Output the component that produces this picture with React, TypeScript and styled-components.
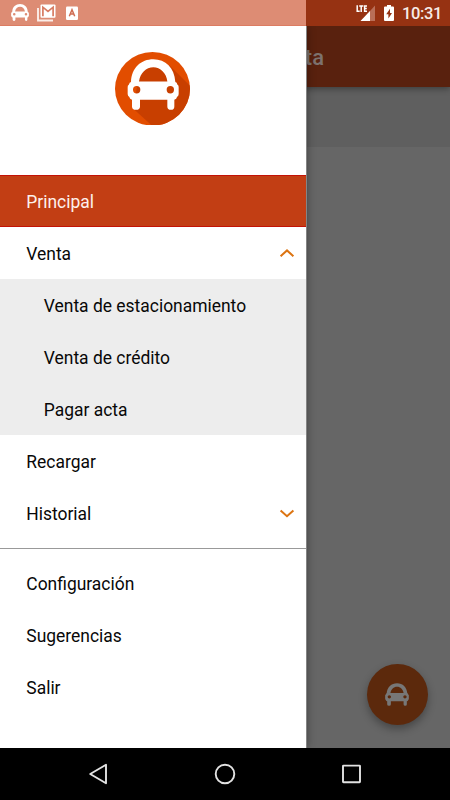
import React from 'react';
import styled, { createGlobalStyle, css } from 'styled-components';

const GlobalStyle = createGlobalStyle`
  * { box-sizing: border-box; }
  body { margin: 0; font-family: Roboto, "Liberation Sans", sans-serif; }
`;

const Phone = styled.div`
  position: relative;
  display: flex;
  flex-direction: column;
  width: 450px;
  height: 800px;
  overflow: hidden;
  background: #666;
`;

const StatusBar = styled.header`
  position: relative;
  z-index: 3;
  flex: none;
  display: flex;
  justify-content: space-between;
  height: 26px;
  background: #963212;
`;

const Notifications = styled.div`
  display: flex;
  align-items: center;
  gap: 8px;
  width: 306px;
  padding-left: 11px;
  background: #dd8c74;
  border-bottom: 1px solid #dc7c62;
`;

const SystemIcons = styled.div`
  display: flex;
  align-items: center;
  padding-right: 9px;
`;

const Signal = styled.svg`
  width: 20px;
  height: 18px;
  margin-right: 8px;
`;

const Battery = styled.svg`
  width: 10px;
  height: 16px;
  margin-right: 8px;
`;

const Clock = styled.time`
  color: #f6ebe7;
  font-size: 16.5px;
  font-weight: 500;
  line-height: 26px;
  width: 39px;
  letter-spacing: -0.4px;
  padding-top: 2px;
`;

const Content = styled.main`
  position: relative;
  flex: 1;
  display: flex;
  flex-direction: column;
`;

const AppBar = styled.div`
  z-index: 1;
  height: 61px;
  padding: 19px 126px 0 0;
  background: #59210e;
  box-shadow: 0 2px 6px rgba(0, 0, 0, 0.35);
  color: #7d726e;
  font-size: 22px;
  font-weight: 500;
  line-height: 26px;
  text-align: right;
`;

const Toolbar = styled.div`
  height: 60px;
  background: #5f5f5f;
`;

const Fab = styled.button`
  position: absolute;
  right: 22px;
  bottom: 23px;
  display: flex;
  align-items: center;
  justify-content: center;
  width: 61px;
  height: 61px;
  padding: 0 1px 0 0;
  border: 0;
  border-radius: 50%;
  background: #5c290c;
  box-shadow: 0 4px 9px rgba(0, 0, 0, 0.32);
`;

const Drawer = styled.nav`
  position: absolute;
  z-index: 2;
  inset: 0 auto 0 0;
  width: 306px;
  background: #fff;
  box-shadow: 1px 0 0 #848484, 0 0 9px rgba(0, 0, 0, 0.45);
`;

const DrawerHeader = styled.div`
  display: flex;
  justify-content: center;
  height: 149px;
  padding: 25.5px 1px 0 0;
`;

const Logo = styled.svg`
  width: 75px;
  height: 73.5px;
`;

const Submenu = styled.div`
  background: #ededed;
`;

const Item = styled.div<{ $active?: boolean; $nested?: boolean }>`
  display: flex;
  align-items: center;
  justify-content: space-between;
  height: 52px;
  padding: 1px 11.5px 0 ${(p) => (p.$nested ? 43.8 : 26.3)}px;
  color: #080808;
  font-size: 17.45px;
  ${(p) =>
    p.$active &&
    css`
      background: #c23e14;
      border-top: 1px solid #c31206;
      border-bottom: 1px solid #c31206;
      color: #fdf0ec;
    `}
`;

const Chevron = styled.svg`
  width: 16px;
  height: 12px;
  fill: none;
  stroke: #dc7412;
  stroke-width: 2;
`;

const Divider = styled.hr`
  height: 1px;
  margin: 9px 0 8px;
  border: 0;
  background: #999;
`;

const SystemNav = styled.footer`
  position: relative;
  z-index: 3;
  flex: none;
  display: flex;
  align-items: center;
  justify-content: space-between;
  height: 52px;
  padding: 0 87px 0 86px;
  background: #000;
`;

const NavIcon = styled.svg`
  width: 24px;
  height: 24px;
  fill: none;
  stroke: #e2e2e2;
  stroke-width: 1.9;
`;

const carBody =
  'M78 125 C80 82 108 57 145 57 C182 57 208 82 211 125 Q216 126 217 132 Q222 135 221 141 V161 Q221 167 216 170 Q215 177 208 178 V198 Q208 208 198 208 Q187 208 187 198 V178 H105 V198 Q105 208 93 208 Q81 208 81 198 V178 Q74 177 73 170 Q68 167 68 161 V141 Q67 135 72 132 Q73 126 78 125 Z M102 123 H187 C184 98 166 81 145 81 C123 81 106 98 102 123 Z M84 148 a11 11 0 1 0 22 0 a11 11 0 1 0 -22 0 Z M185 148 a11 11 0 1 0 22 0 a11 11 0 1 0 -22 0 Z';

function Car({ width, height, color }: { width: number; height: number; color: string }) {
  return (
    <svg width={width} height={height} viewBox="67 56 155 153" preserveAspectRatio="none">
      <path d={carBody} fill={color} fillRule="evenodd" />
    </svg>
  );
}

function Arrow({ up }: { up?: boolean }) {
  return (
    <Chevron viewBox="0 0 16 12">
      <path d={up ? 'M1.6 8.2 L8 2.4 L14.4 8.2' : 'M1.6 2.4 L8 8.2 L14.4 2.4'} />
    </Chevron>
  );
}

export default function App() {
  return (
    <>
      <GlobalStyle />
      <Phone>
        <StatusBar>
          <Notifications>
            <Car width={18} height={17} color="#fff" />
            <svg width="20" height="18" viewBox="0 0 20 18">
              <path d="M1 4 V16.5 H16" fill="none" stroke="#fbeee9" strokeWidth="1.9" />
              <rect x="3.5" y="0.5" width="15" height="13.2" rx="1" fill="#fff" />
              <path d="M5.9 12.2 V3.2 L11 7.4 L16.1 3.2 V12.2" fill="none" stroke="#d77b62" strokeWidth="1.7" />
            </svg>
            <svg width="14" height="14" viewBox="0 0 14 14">
              <rect x="1" y="0.5" width="12" height="13.5" rx="1.2" fill="#fff" />
              <path d="M4.3 10.2 L7 3.8 L9.7 10.2 M5.2 8 H8.8" fill="none" stroke="#cf6d53" strokeWidth="1.5" />
            </svg>
          </Notifications>
          <SystemIcons>
            <Signal viewBox="0 0 20 18">
              <path d="M19 1.5 V17 H5 Z" fill="#b96f58" />
              <path d="M14 7 V17 H4.5 Z" fill="#fff" />
              <path d="M0 0 H11.5 V8.5 H0 Z" fill="#963212" />
              <path d="M1.2 1.3 V7.2 H3.7 M3.2 1.9 H7.3 M5.2 1.9 V7.9 M11 1.9 H8.6 V7.2 H11 M8.6 4.5 H10.8" fill="none" stroke="#fff" strokeWidth="1.5" />
            </Signal>
            <Battery viewBox="0 0 10 16">
              <path d="M3 0 H7 V1.6 H9 Q10 1.6 10 2.6 V15 Q10 16 9 16 H1 Q0 16 0 15 V2.6 Q0 1.6 1 1.6 H3 Z" fill="#fff" />
              <path d="M6 3.8 L2.2 9.3 H4.4 V13.5 L8 7.9 H6 Z" fill="#963212" />
            </Battery>
            <Clock>10:31</Clock>
          </SystemIcons>
        </StatusBar>

        <Content>
          <AppBar>Venta</AppBar>
          <Toolbar />
          <Fab aria-label="Estacionar">
            <Car width={24} height={23} color="#777" />
          </Fab>
          <Drawer>
            <DrawerHeader>
              <Logo viewBox="30 35 225 220" preserveAspectRatio="none">
                <defs>
                  <clipPath id="disc">
                    <ellipse cx="142.5" cy="145" rx="112.5" ry="110" />
                  </clipPath>
                </defs>
                <g clipPath="url(#disc)">
                  <rect x="30" y="35" width="225" height="220" fill="#e24d00" />
                  <path d="M192 74 L260 141 V260 H146 L85 205 L105 85 Z" fill="#c83f00" />
                </g>
                <path d={carBody} fill="#fff" fillRule="evenodd" />
              </Logo>
            </DrawerHeader>
            <Item $active>Principal</Item>
            <Item>
              Venta
              <Arrow up />
            </Item>
            <Submenu>
              <Item $nested>Venta de estacionamiento</Item>
              <Item $nested>Venta de crédito</Item>
              <Item $nested>Pagar acta</Item>
            </Submenu>
            <Item>Recargar</Item>
            <Item>
              Historial
              <Arrow />
            </Item>
            <Divider />
            <Item>Configuración</Item>
            <Item>Sugerencias</Item>
            <Item>Salir</Item>
          </Drawer>
        </Content>

        <SystemNav>
          <NavIcon viewBox="0 0 24 24">
            <path d="M20 2.8 V21.2 L4.2 12 Z" strokeLinejoin="round" />
          </NavIcon>
          <NavIcon viewBox="0 0 24 24">
            <circle cx="12" cy="12" r="9.3" />
          </NavIcon>
          <NavIcon viewBox="0 0 24 24">
            <rect x="4" y="3.6" width="17" height="16.6" rx="0.5" />
          </NavIcon>
        </SystemNav>
      </Phone>
    </>
  );
}
